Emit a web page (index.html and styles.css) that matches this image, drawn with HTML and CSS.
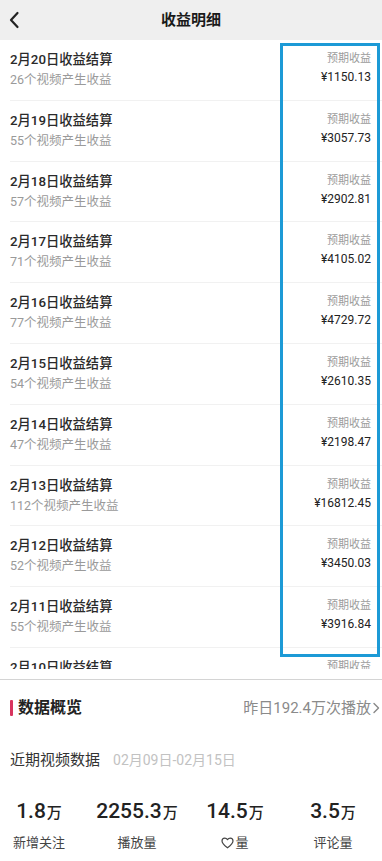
FILE: index.html
```html
<!DOCTYPE html>
<html lang="zh">
<head>
<meta charset="utf-8">
<title>收益明细</title>
<link rel="stylesheet" href="styles.css">
</head>
<body>
<div class="page">
  <header class="topbar">
    <svg class="back" width="12" height="18" viewBox="0 0 12 18"><path d="M9.5 2 L3 9 L9.5 16" fill="none" stroke="#222" stroke-width="2.2" stroke-linecap="round" stroke-linejoin="round"/></svg>
    <h1 class="title">收益明细</h1>
  </header>

  <div class="list-wrap">
    <ul class="list">
      <li class="row"><div class="left"><div class="r-title">2月20日收益结算</div><div class="r-sub">26个视频产生收益</div></div><div class="right"><div class="r-label">预期收益</div><div class="r-amount">¥1150.13</div></div></li>
      <li class="row"><div class="left"><div class="r-title">2月19日收益结算</div><div class="r-sub">55个视频产生收益</div></div><div class="right"><div class="r-label">预期收益</div><div class="r-amount">¥3057.73</div></div></li>
      <li class="row"><div class="left"><div class="r-title">2月18日收益结算</div><div class="r-sub">57个视频产生收益</div></div><div class="right"><div class="r-label">预期收益</div><div class="r-amount">¥2902.81</div></div></li>
      <li class="row"><div class="left"><div class="r-title">2月17日收益结算</div><div class="r-sub">71个视频产生收益</div></div><div class="right"><div class="r-label">预期收益</div><div class="r-amount">¥4105.02</div></div></li>
      <li class="row"><div class="left"><div class="r-title">2月16日收益结算</div><div class="r-sub">77个视频产生收益</div></div><div class="right"><div class="r-label">预期收益</div><div class="r-amount">¥4729.72</div></div></li>
      <li class="row"><div class="left"><div class="r-title">2月15日收益结算</div><div class="r-sub">54个视频产生收益</div></div><div class="right"><div class="r-label">预期收益</div><div class="r-amount">¥2610.35</div></div></li>
      <li class="row"><div class="left"><div class="r-title">2月14日收益结算</div><div class="r-sub">47个视频产生收益</div></div><div class="right"><div class="r-label">预期收益</div><div class="r-amount">¥2198.47</div></div></li>
      <li class="row"><div class="left"><div class="r-title">2月13日收益结算</div><div class="r-sub">112个视频产生收益</div></div><div class="right"><div class="r-label">预期收益</div><div class="r-amount">¥16812.45</div></div></li>
      <li class="row"><div class="left"><div class="r-title">2月12日收益结算</div><div class="r-sub">52个视频产生收益</div></div><div class="right"><div class="r-label">预期收益</div><div class="r-amount">¥3450.03</div></div></li>
      <li class="row"><div class="left"><div class="r-title">2月11日收益结算</div><div class="r-sub">55个视频产生收益</div></div><div class="right"><div class="r-label">预期收益</div><div class="r-amount">¥3916.84</div></div></li>
      <li class="row"><div class="left"><div class="r-title">2月10日收益结算</div><div class="r-sub">48个视频产生收益</div></div><div class="right"><div class="r-label">预期收益</div><div class="r-amount">¥2871.56</div></div></li>
    </ul>
    <div class="highlight"></div>
  </div>

  <section class="panel">
    <div class="panel-head">
      <div class="ph-left"><span class="bar"></span><span class="ph-title">数据概览</span></div>
      <div class="ph-right">昨日192.4万次播放<svg class="chev" width="8" height="12" viewBox="0 0 8 12"><path d="M2 1.5 L6.5 6 L2 10.5" fill="none" stroke="#888" stroke-width="1.4" stroke-linecap="round" stroke-linejoin="round"/></svg></div>
    </div>
    <div class="recent">
      <span class="recent-title">近期视频数据</span>
      <span class="recent-date">02月09日-02月15日</span>
    </div>
    <div class="stats">
      <div class="stat"><div class="num">1.8<span class="unit">万</span></div><div class="lab">新增关注</div></div>
      <div class="stat"><div class="num">2255.3<span class="unit">万</span></div><div class="lab">播放量</div></div>
      <div class="stat"><div class="num">14.5<span class="unit">万</span></div><div class="lab"><svg class="heart" width="13" height="12" viewBox="0 0 13 12"><path d="M6.5 10.8 C3 8.2 1 6.3 1 4 C1 2.3 2.3 1.1 3.8 1.1 C5 1.1 5.9 1.8 6.5 2.7 C7.1 1.8 8 1.1 9.2 1.1 C10.7 1.1 12 2.3 12 4 C12 6.3 10 8.2 6.5 10.8 Z" fill="none" stroke="#444" stroke-width="1.2" stroke-linejoin="round"/></svg>量</div></div>
      <div class="stat"><div class="num">3.5<span class="unit">万</span></div><div class="lab">评论量</div></div>
    </div>
  </section>
</div>
</body>
</html>
```
FILE: styles.css
```css
* { box-sizing: border-box; margin: 0; padding: 0; }
html, body { background: #fff; }
body {
  font-family: Roboto, "Noto Sans CJK SC", sans-serif;
  color: #222;
  width: 382px;
  height: 861px;
  overflow: hidden;
}
.page { width: 382px; height: 861px; display: flex; flex-direction: column; }

.topbar {
  height: 40px;
  background: #efefef;
  display: flex;
  align-items: center;
  justify-content: center;
  position: relative;
  flex: none;
}
.back { position: absolute; left: 8px; top: 11px; }
.title { font-size: 15px; font-weight: 600; color: #1a1a1a; line-height: 20px; }

.list-wrap {
  position: relative;
  height: 629px;
  overflow: hidden;
  flex: none;
}
.list { list-style: none; }
.row {
  height: 60.8px;
  margin-left: 10px;
  border-bottom: 1px solid #f1f1f1;
  display: flex;
  justify-content: space-between;
}
.left { padding-top: 10px; }
.r-title { font-size: 13.3px; line-height: 20px; color: #2a2a2a; font-weight: 500; }
.r-sub { font-size: 12.5px; line-height: 20px; color: #9a9a9a; }
.right { padding-top: 9px; padding-right: 11px; text-align: right; }
.r-label { font-size: 11px; line-height: 20px; color: #9c9c9c; }
.r-amount { font-size: 12px; line-height: 16px; color: #222; }

.highlight {
  position: absolute;
  left: 280px;
  top: 3px;
  width: 100px;
  height: 614px;
  border: 3px solid #1c9ad6;
}

.panel {
  flex: 1;
  margin-top: 10px;
  border-top: 1px solid #d4d4d4;
  background: #fff;
}
.panel-head {
  display: flex;
  justify-content: space-between;
  align-items: center;
  height: 56px;
  padding: 0 2px 0 10px;
}
.ph-left { display: flex; align-items: center; }
.bar { width: 3px; height: 16px; background: #d8345f; border-radius: 1px; margin-right: 5px; }
.ph-title { font-size: 16px; font-weight: 600; color: #222; line-height: 22px; }
.ph-right { font-size: 15px; color: #8a8a8a; display: flex; align-items: center; line-height: 20px; }
.chev { margin-left: 1px; }

.recent {
  display: flex;
  align-items: center;
  padding-left: 10px;
  height: 48px;
}
.recent-title { font-size: 15px; color: #333; line-height: 20px; }
.recent-date { font-size: 14px; color: #c2c2c2; margin-left: 13px; line-height: 20px; }

.stats {
  display: flex;
  margin-left: -10px;
  padding-top: 14px;
}
.stat {
  width: 102px;
  display: flex;
  flex-direction: column;
  align-items: center;
}
.num { font-size: 21px; font-weight: 500; color: #222; line-height: 26px; }
.unit { font-size: 15px; font-weight: 500; margin-left: 1px; }
.lab { font-size: 13px; color: #444; line-height: 18px; margin-top: 8px; display: flex; align-items: center; }
.heart { margin-right: 1px; }
```
